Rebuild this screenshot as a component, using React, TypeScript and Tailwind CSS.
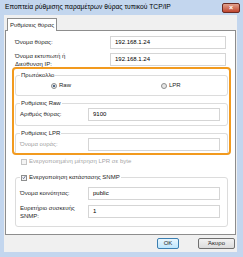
import type { ReactNode } from "react";

function Field({ value, className = "" }: { value?: string; className?: string }) {
  return (
    <div
      className={`flex h-[13px] shrink-0 items-center border border-[#d5d5d5] bg-white px-[4px] text-black ${className}`}
    >
      {value}
    </div>
  );
}

function Group({
  title,
  className = "",
  children,
}: {
  title: ReactNode;
  className?: string;
  children: ReactNode;
}) {
  return (
    <div className={`relative rounded-[3px] border border-[#dcdcdc] ${className}`}>
      <div className="absolute -top-[5px] left-[4px] flex items-center bg-white px-[1px] leading-[9px]">
        {title}
      </div>
      {children}
    </div>
  );
}

function Radio({ checked, label }: { checked?: boolean; label: string }) {
  return (
    <div className="flex items-center gap-[2px]">
      <span className="flex size-[6px] items-center justify-center rounded-full border border-[#8e8f8f] bg-[#e6e6e6]">
        {checked && <span className="size-[2px] rounded-full bg-[#1b3e6b]" />}
      </span>
      <span>{label}</span>
    </div>
  );
}

function Check({ checked, disabled }: { checked?: boolean; disabled?: boolean }) {
  return (
    <span
      className={`flex size-[6px] shrink-0 items-center justify-center border ${
        disabled ? "border-[#c5c5c5] bg-[#f4f4f4]" : "border-[#8e8f8f] bg-[#f4f4f4]"
      }`}
    >
      {checked && (
        <svg viewBox="0 0 6 6" className="size-[5px]">
          <path d="M1 3.2 L2.4 4.6 L5 1" fill="none" stroke="#23356a" strokeWidth="1" />
        </svg>
      )}
    </span>
  );
}

export default function App() {
  return (
    <div
      className="flex h-[257px] w-[243px] flex-col bg-[#c3d6ee] text-[6px] text-[#1e1e1e]"
      style={{ fontFamily: '"Liberation Sans", Arial, sans-serif' }}
    >
      <div className="flex h-[15px] items-center justify-between pl-[5px] pr-[3px]">
        <span className="text-[6.7px] text-black">
          Εποπτεία ρύθμισης παραμέτρων θύρας τυπικού TCP/IP
        </span>
        <span className="flex h-[10px] w-[18px] items-center justify-center rounded-[2px] border border-[#6b2a22] bg-gradient-to-b from-[#e0a08d] to-[#c0432c] text-[7px] font-bold leading-none text-white">
          ×
        </span>
      </div>

      <div className="mb-[5px] ml-[4px] mr-[6px] flex flex-1 flex-col bg-[#f0f0f0] px-[1px] pt-[3px]">
        <div className="ml-[2px] flex">
          <div className="z-10 -mb-px flex h-[13px] w-[50px] items-center justify-center border border-b-0 border-[#8d8d8d] bg-white">
            Ρυθμίσεις θύρας
          </div>
        </div>

        <div className="h-[205px] border border-[#8d8d8d] bg-white px-[9px] pt-[5px]">
          <div className="flex h-[13px] items-center">
            <span className="w-[97px]">Όνομα θύρας:</span>
            <Field value="192.168.1.24" className="w-[116px]" />
          </div>
          <div className="mt-[4px] flex h-[13px] items-center">
            <span className="w-[97px] leading-[8px]">
              Όνομα εκτυπωτή ή
              <br />
              Διεύθυνση IP:
            </span>
            <Field value="192.168.1.24" className="w-[116px]" />
          </div>

          <div className="-ml-[3px] -mr-[5px] mt-[1px] h-[88px] rounded-[4px] border-2 border-[#f29a1e] px-[1px] pt-[6px]">
            <Group title="Πρωτόκολλο" className="h-[21px]">
              <div className="flex pt-[5px]">
                <div className="ml-[35px] w-[110px]">
                  <Radio checked label="Raw" />
                </div>
                <Radio label="LPR" />
              </div>
            </Group>

            <Group title="Ρυθμίσεις Raw" className="mt-[7px] h-[23px]">
              <div className="flex items-center pl-[4px] pt-[4px]">
                <span className="w-[68px]">Αριθμός θύρας:</span>
                <Field value="9100" className="w-[132px]" />
              </div>
            </Group>

            <Group title="Ρυθμίσεις LPR" className="mt-[7px] h-[20px] rounded-b-none border-b-0">
              <div className="flex items-center pl-[4px] pt-[4px]">
                <span className="w-[68px] text-[#a0a0a0]">Όνομα ουράς:</span>
                <Field className="w-[132px]" />
              </div>
            </Group>
          </div>

          <div className="ml-[6px] mt-[3px] flex h-[7px] items-center gap-[2px] text-[#a6a6a6]">
            <Check disabled />
            <span>Ενεργοποιημένη μέτρηση LPR σε byte</span>
          </div>

          <Group
            className="-mr-[2px] mt-[12px] h-[50px]"
            title={
              <span className="flex items-center gap-[2px]">
                <Check checked />
                <span>Ενεργοποίηση κατάστασης SNMP</span>
              </span>
            }
          >
            <div className="pl-[4px] pt-[9px]">
              <div className="flex h-[13px] items-center">
                <span className="w-[68px]">Όνομα κοινότητας:</span>
                <Field value="public" className="w-[132px]" />
              </div>
              <div className="mt-[5px] flex h-[13px] items-center">
                <span className="w-[68px] leading-[8px]">
                  Ευρετήριο συσκευής
                  <br />
                  SNMP:
                </span>
                <Field value="1" className="w-[132px]" />
              </div>
            </div>
          </Group>
        </div>

        <div className="mt-[3px] flex justify-end gap-[19px] pr-[1px]">
          <button className="flex h-[11px] w-[22px] items-center justify-center rounded-[2px] border border-[#3c7fb1] bg-gradient-to-b from-[#eaf6fd] to-[#bee6fd]">
            OK
          </button>
          <button className="flex h-[11px] w-[37px] items-center justify-center rounded-[2px] border border-[#707070] bg-gradient-to-b from-[#f2f2f2] to-[#dcdcdc]">
            Άκυρο
          </button>
        </div>
      </div>
    </div>
  );
}
